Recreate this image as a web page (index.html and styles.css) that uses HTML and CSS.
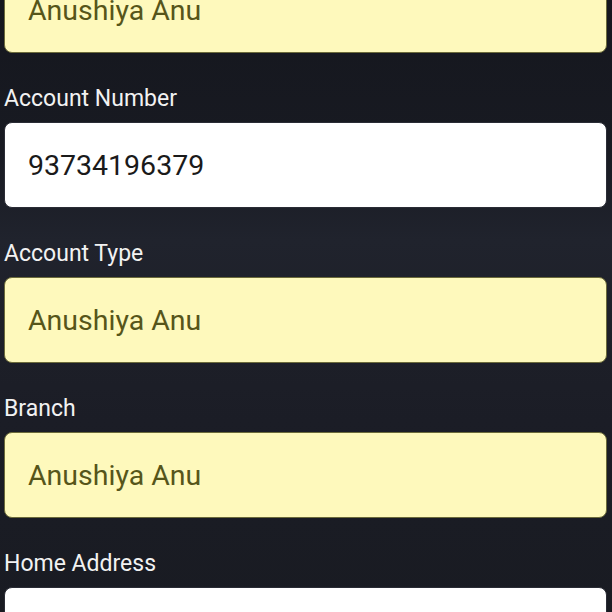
FILE: index.html
```html
<!DOCTYPE html>
<html>
<head>
<meta charset="utf-8">
<link rel="stylesheet" href="styles.css">
</head>
<body>
<div class="form">
  <div class="field">
    <div class="box yellow">Anushiya Anu</div>
  </div>
  <div class="field">
    <div class="label">Account Number</div>
    <div class="box white">93734196379</div>
  </div>
  <div class="field">
    <div class="label">Account Type</div>
    <div class="box yellow">Anushiya Anu</div>
  </div>
  <div class="field">
    <div class="label">Branch</div>
    <div class="box yellow">Anushiya Anu</div>
  </div>
  <div class="field">
    <div class="label">Home Address</div>
    <div class="box white"></div>
  </div>
</div>
</body>
</html>
```
FILE: styles.css
```css
html, body {
  margin: 0;
  padding: 0;
  height: 612px;
  overflow: hidden;
}
body {
  background: linear-gradient(180deg, #15171e 0px, #181a22 150px, #20232d 240px, #1e2029 320px, #1b1d26 420px, #191b22 612px);
  font-family: Roboto, "Noto Sans", sans-serif;
}
.form {
  margin-top: -33px;
  padding: 0 5px 0 4px;
  display: flex;
  flex-direction: column;
}
.label {
  color: #f2f2f2;
  font-size: 23px;
  line-height: 27px;
  padding: 32px 0 10px 0;
}
.box {
  box-sizing: border-box;
  height: 86px;
  border-radius: 8px;
  display: flex;
  align-items: center;
  padding-left: 23px;
  font-size: 28.5px;
}
.yellow {
  background: #fef9bc;
  color: #56551a;
  border: 1px solid #6b6a3a;
}
.white {
  background: #ffffff;
  color: #1a1a1a;
  border: 1px solid #2a2c35;
}
```
